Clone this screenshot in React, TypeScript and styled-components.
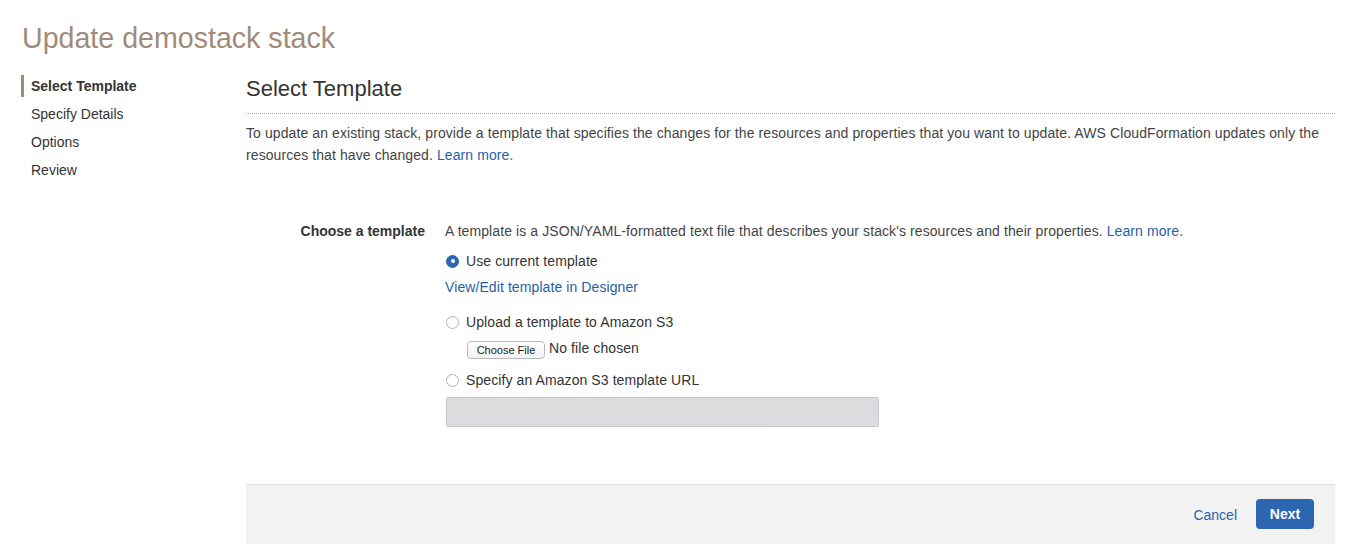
import React from "react";
import styled, { createGlobalStyle } from "styled-components";

const Global = createGlobalStyle`
  html, body { margin: 0; padding: 0; background: #fff; }
  body { font-family: "Liberation Sans", Arial, Helvetica, sans-serif; color: #444; font-size: 14px; }
  * { box-sizing: border-box; }
`;

const Page = styled.div`
  padding: 21px 12px 0 22px;
`;

const Title = styled.h1`
  margin: 0 0 17px 0;
  font-size: 28.6px;
  line-height: 34px;
  font-weight: 400;
  color: #a08b79;
`;

const Layout = styled.div`
  display: flex;
  align-items: flex-start;
`;

const Sidebar = styled.nav`
  width: 225px;
  flex: none;
  padding-top: 3px;
  margin-left: -1px;
`;

const NavItem = styled.div<{ $active?: boolean }>`
  line-height: 22px;
  margin-bottom: 6px;
  padding-left: 7px;
  border-left: 3px solid ${(p) => (p.$active ? "#a08b79" : "transparent")};
  font-weight: ${(p) => (p.$active ? 700 : 400)};
  color: #333;
  font-size: 14px;
`;

const Main = styled.main`
  flex: 1;
  min-width: 0;
`;

const Heading = styled.h2`
  margin: 2px 0 0 0;
  font-size: 22px;
  line-height: 30px;
  font-weight: 400;
  color: #333;
  padding-bottom: 9px;
  border-bottom: 1px dotted #a8a8a8;
`;

const Intro = styled.p`
  margin: 8px 0 0 0;
  line-height: 22px;
  color: #444;
  letter-spacing: 0.09px;
`;

const Link = styled.a`
  color: #1f5fa8;
  text-decoration: none;
  cursor: pointer;
`;

const FormRow = styled.div`
  display: grid;
  grid-template-columns: 179px 1fr;
  column-gap: 20px;
  margin-top: 54px;
`;

const Label = styled.div`
  text-align: right;
  font-weight: 700;
  color: #333;
  line-height: 22px;
`;

const Field = styled.div`
  display: flex;
  flex-direction: column;
  align-items: flex-start;
  letter-spacing: 0.09px;
`;

const Line = styled.div<{ $mt?: number }>`
  line-height: 22px;
  margin-top: ${(p) => p.$mt ?? 0}px;
  color: #444;
`;

const RadioRow = styled.label<{ $mt: number }>`
  display: flex;
  align-items: center;
  gap: 7px;
  line-height: 22px;
  margin-top: ${(p) => p.$mt}px;
  margin-left: 1px;
  color: #333;
  cursor: pointer;
`;

const RadioDot = styled.span<{ $checked?: boolean }>`
  width: 13px;
  height: 13px;
  border-radius: 50%;
  flex: none;
  display: inline-flex;
  align-items: center;
  justify-content: center;
  background: ${(p) => (p.$checked ? "#2c65b2" : "#fff")};
  border: 1px solid ${(p) => (p.$checked ? "#2c65b2" : "#b3b3b3")};
  &::after {
    content: "";
    width: 4px;
    height: 4px;
    border-radius: 50%;
    background: #fff;
    display: ${(p) => (p.$checked ? "block" : "none")};
  }
`;

const FileRow = styled.div`
  display: flex;
  align-items: center;
  gap: 4px;
  line-height: 22px;
  margin-top: 4px;
  margin-left: 22px;
  color: #333;
`;

const FileButton = styled.button`
  font-family: "Liberation Sans", Arial, sans-serif;
  font-size: 11px;
  height: 18px;
  width: 78px;
  padding: 0;
  margin-top: 3px;
  border: 1px solid #b9b9b9;
  border-radius: 4px;
  background: linear-gradient(#ffffff, #f4f4f4);
  color: #222;
`;

const UrlInput = styled.input`
  margin-top: 6px;
  margin-left: 1px;
  width: 433px;
  height: 30px;
  background: #dcdcdf;
  border: 1px dotted #a9b6c8;
  border-radius: 2px;
`;

const Footer = styled.div`
  margin-top: 57px;
  height: 60px;
  background: #f2f2f2;
  border-top: 1px solid #dedede;
  display: flex;
  align-items: center;
  justify-content: flex-end;
  gap: 19px;
  padding-right: 21px;
`;

const CancelLink = styled.a`
  color: #2563ae;
  font-size: 14px;
  cursor: pointer;
`;

const NextButton = styled.button`
  font-family: "Liberation Sans", Arial, sans-serif;
  font-size: 14px;
  font-weight: 700;
  color: #fff;
  background: #2c65b2;
  border: none;
  border-radius: 4px;
  width: 58px;
  height: 30px;
  margin-top: -1px;
`;

export default function App() {
  return (
    <>
      <Global />
      <Page>
        <Title>Update demostack stack</Title>
        <Layout>
          <Sidebar>
            <NavItem $active>Select Template</NavItem>
            <NavItem>Specify Details</NavItem>
            <NavItem>Options</NavItem>
            <NavItem>Review</NavItem>
          </Sidebar>
          <Main>
            <Heading>Select Template</Heading>
            <Intro>
              To update an existing stack, provide a template that specifies the changes for the resources and
              properties that you want to update. AWS CloudFormation updates only the resources that have
              changed. <Link>Learn more.</Link>
            </Intro>
            <FormRow>
              <Label>Choose a template</Label>
              <Field>
                <Line>
                  A template is a JSON/YAML-formatted text file that describes your stack's resources and their
                  properties. <Link>Learn more.</Link>
                </Line>
                <RadioRow $mt={8}>
                  <RadioDot $checked />
                  Use current template
                </RadioRow>
                <Line $mt={4}>
                  <Link>View/Edit template in Designer</Link>
                </Line>
                <RadioRow $mt={13}>
                  <RadioDot />
                  Upload a template to Amazon S3
                </RadioRow>
                <FileRow>
                  <FileButton>Choose File</FileButton>
                  No file chosen
                </FileRow>
                <RadioRow $mt={10}>
                  <RadioDot />
                  Specify an Amazon S3 template URL
                </RadioRow>
                <UrlInput disabled />
              </Field>
            </FormRow>
            <Footer>
              <CancelLink>Cancel</CancelLink>
              <NextButton>Next</NextButton>
            </Footer>
          </Main>
        </Layout>
      </Page>
    </>
  );
}
